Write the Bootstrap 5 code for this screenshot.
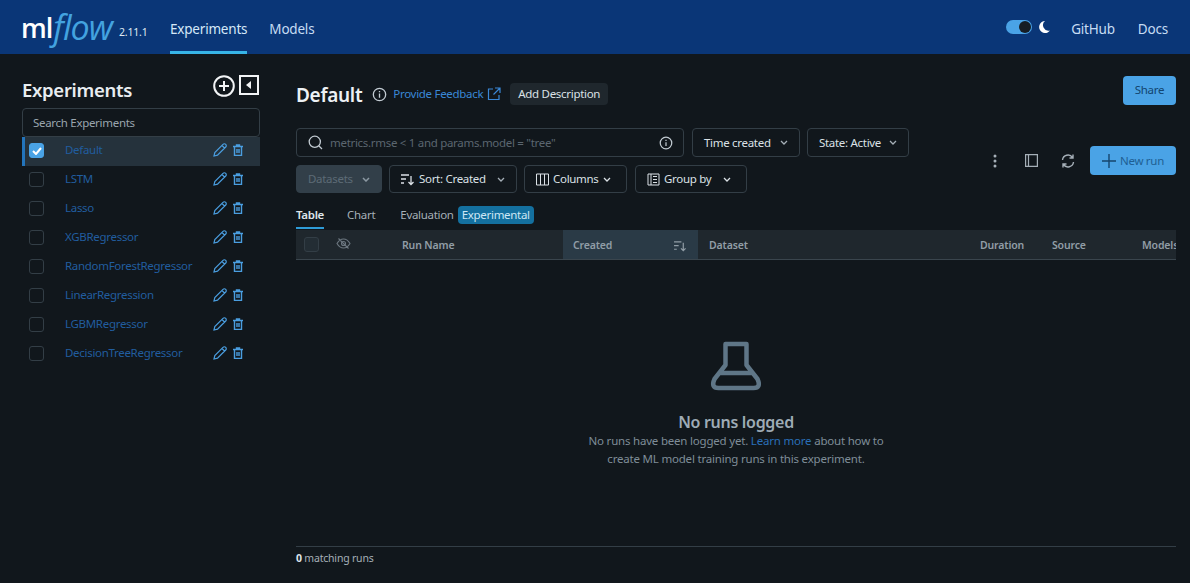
<!DOCTYPE html>
<html lang="en"><head><meta charset="utf-8"><title>MLflow</title>
<link href="https://cdn.jsdelivr.net/npm/bootstrap@5.3.0/dist/css/bootstrap.min.css" rel="stylesheet">
<style>
html,body{height:100%;}
body{background:#11171c;color:#e6ebef;font-family:"Noto Sans","Open Sans",sans-serif;font-size:11.5px;letter-spacing:-.3px;overflow:hidden;}
svg{display:block;flex:none;}
.top-bar{height:54px;background:#0a3677;padding:0 22px 0 21px;}
.logo-wrap{width:98px;height:54px;line-height:1;}
.logo-ml{font:600 27px/1 "Open Sans",sans-serif;color:#fff;letter-spacing:-1px;}
.logo-flow{font:italic 400 34px/1 "Open Sans",sans-serif;color:#43a3e0;margin-left:1px;letter-spacing:-1px;}
.logo-ver{font-size:10.5px;color:#dfe8f2;margin:11px 0 0 0;letter-spacing:-.2px;width:28px;white-space:nowrap;}
.top-nav{margin-left:23px;gap:22px;}
.top-link{height:54px;display:flex;align-items:center;font-size:13.5px;letter-spacing:-.2px;color:#c6dcf3;text-decoration:none;border-bottom:3px solid transparent;padding-top:7px;}
.top-link.on{color:#d5e8f8;border-bottom-color:#37b4e6;}
.main-area{height:529px;}
.side-pane{width:238px;margin-left:22px;flex:none;}
.side-head{height:54px;padding-top:21px;}
.side-title{font-size:18.5px;font-weight:600;color:#e8edf1;line-height:30px;}
.side-search{height:29px;border:1px solid #333e46;border-radius:4px;padding:0 10px;color:#9aa5ae;line-height:27px;}
.exp-row{height:29px;padding:0 0 2px 4px;color:#215d9f;border-left:3px solid transparent;}
.exp-row.sel{background:#25323c;border-left-color:#2374bb;}
.fake-check{width:15px;height:15px;border:1px solid #333e46;border-radius:3px;margin-right:21px;flex:none;}
.fake-check.on{background:#4aa3e6;border-color:#4aa3e6;}
.exp-name{flex:1;min-width:0;white-space:nowrap;margin-bottom:2px;}
.exp-tools{width:47px;gap:6px;padding-bottom:2px;}
.content-pane{margin-left:36px;margin-right:14px;min-width:0;}
.title-row{height:74px;padding-top:20px;}
.page-title{font-size:19px;font-weight:600;color:#edf1f4;line-height:42px;}
.title-meta{height:40px;}
.fb-link{color:#3a87d6;text-decoration:none;margin-left:6px;white-space:nowrap;}
.desc-chip{background:#1f272d;color:#dbe1e6;border-radius:4px;height:22px;padding:0 8px;line-height:21px;margin-left:9px;}
.share-btn{background:#4aa3e6;color:#12456f;border-radius:4px;width:53px;height:29px;line-height:28px;text-align:center;margin-top:2px;}
.tool-box{height:29px;border:1px solid #333e46;border-radius:4px;padding:0 11px;color:#dbe1e6;white-space:nowrap;}
.tool-row2 .tool-box{height:28px;}
.filter-box{width:388px;color:#5b6670;padding:0 10px 0 11px;}
.filter-icon{margin-right:7px;}
.w-time{width:108px;margin-left:1px;}.w-state{width:102px;}.w-data{width:86px;}.w-sort{width:128px;}
.w-cols{width:103px;padding-right:15px;}.w-group{width:112px;padding-right:15px;margin-left:1px;}
.tool-muted{background:#323f49;border-color:#323f49;color:#5d6b76;}
.tool-gap{gap:7px;}
.new-run{background:#4aa3e6;color:#1f5f93;border-radius:4px;height:29px;width:86px;}
.tab-row{height:25px;margin-top:12px;}
.tab-item{color:#a5afb7;height:24px;line-height:20px;}
.tab-item.on{color:#dfe5ea;font-weight:600;border-bottom:2px solid #2e9bd6;}
.exp-chip{background:#14709f;color:#cde7f5;border-radius:4px;height:18px;line-height:17px;padding:0 4px;margin:1px 0 0 4px;}
.run-head{height:30px;background:#1f272d;border-bottom:1px solid #3a454d;color:#919da6;font-weight:600;font-size:10.5px;letter-spacing:-.15px;overflow:hidden;white-space:nowrap;}
.col-box{flex:none;height:29px;display:flex;align-items:center;padding-top:2px;}
.col-created{background:#2a3a46;}
.empty-zone{height:286px;padding-top:81px;}
.empty-head{font-size:16px;font-weight:600;color:#9eabb5;line-height:22px;margin-top:18px;}
.empty-text{color:#7f8d98;line-height:18px;font-size:11.5px;letter-spacing:-.2px;margin-top:-1px;}
.empty-text a{color:#2a6fb8;text-decoration:none;}
.foot-row{border-top:1px solid #333e46;height:30px;line-height:23px;font-size:10.5px;letter-spacing:-.2px;color:#a5afb7;}
.foot-row b{color:#dfe5ea;}
.toggle-track{width:26px;height:14px;border-radius:7px;background:#4aa3e6;position:relative;}
.toggle-knob{position:absolute;right:1px;top:1px;width:12px;height:12px;border-radius:50%;background:#161d24;}
.moon{margin-left:6px;}
.gh-link{margin-left:20px;}
.docs-link{margin-left:23px;}
.tab-gap{margin-left:23px;}
.tab-gap-wide{margin-left:25px;}
.chk-head{margin:0 0 2px 8px;background:#232d34;}
.eye-icon{margin:0 0 5px 17px;}
.act-a{margin-left:28px;}.act-b{margin-left:23px;}.act-c{margin-left:15px;}
.c-icons{width:105px;}.c-name{width:162px;padding-left:1px;}.c-created{width:135px;padding:2px 11px 0 10px;}
.c-data{width:271px;padding-left:11px;}.c-dur{width:83px;padding-left:11px;}.c-src{width:90px;}
.info-icon{margin-left:10px;}
.side-icons{margin-right:1px;}
</style></head>
<body>
<header class="top-bar d-flex align-items-center">
  <div class="logo-wrap d-flex align-items-center"><span class="logo-ml">ml</span><span class="logo-flow">flow</span></div>
  <span class="logo-ver">2.11.1</span>
  <nav class="d-flex me-auto top-nav">
    <a class="top-link on" href="#">Experiments</a>
    <a class="top-link" href="#">Models</a>
  </nav>
  <div class="toggle-track"><div class="toggle-knob"></div></div>
  <svg class="moon" width="13" height="14" viewBox="0 0 13 14"><path d="M7 1a6 6 0 1 0 5 9.500A5.500 5.500 0 0 1 7 1z" fill="#fff"/></svg>
  <a class="top-link gh-link" href="#">GitHub</a>
  <a class="top-link docs-link" href="#">Docs</a>
</header>
<div class="main-area d-flex">
  <aside class="side-pane">
    <div class="side-head d-flex justify-content-between">
      <span class="side-title">Experiments</span>
      <div class="d-flex gap-1 align-items-start side-icons">
        <svg width="22" height="22" viewBox="0 0 22 22" fill="none" stroke="#f2f4f6" stroke-width="2"><circle cx="11" cy="11" r="9.800"/><path d="M11 6v10M6 11h10"/></svg>
        <svg width="20" height="20" viewBox="0 0 20 20"><rect x="1" y="1" width="18" height="18" fill="none" stroke="#f2f4f6" stroke-width="2"/><path d="M12 6v8l-5-4z" fill="#f2f4f6"/></svg>
      </div>
    </div>
    <div class="side-search">Search Experiments</div>
    <div id="exps"></div>
  </aside>
  <section class="content-pane flex-grow-1 d-flex flex-column">
    <div class="title-row d-flex align-items-start">
      <span class="page-title">Default</span>
      <div class="d-flex align-items-center title-meta">
        <svg class="info-icon" width="15" height="15" viewBox="0 0 16 16" fill="none" stroke="#c3ccd3" stroke-width="1.400"><circle cx="8" cy="8" r="6.600"/><path d="M8 7v4.500M8 4.200v1.400"/></svg>
        <a class="fb-link" href="#">Provide Feedback</a>
        <svg class="ms-1" width="14" height="14" viewBox="0 0 14 14" fill="none" stroke="#3a87d6" stroke-width="1.200"><path d="M6 2H1.500v10.500H12V8M8 1h5v5M13 1L6.500 7.500"/></svg>
        <span class="desc-chip">Add Description</span>
      </div>
      <span class="share-btn ms-auto">Share</span>
    </div>
    <div class="d-flex align-items-center justify-content-between">
      <div class="d-flex flex-column gap-2">
        <div class="d-flex tool-gap">
          <div class="tool-box filter-box d-flex align-items-center">
            <svg class="filter-icon" width="15" height="15" viewBox="0 0 15 15" fill="none" stroke="#c3ccd3" stroke-width="1.300"><circle cx="6.800" cy="6.800" r="5.600"/><path d="M11 11l3 3"/></svg>
            <span class="flex-grow-1">metrics.rmse &lt; 1 and params.model = "tree"</span>
            <svg width="14" height="14" viewBox="0 0 16 16" fill="none" stroke="#c3ccd3" stroke-width="1.400"><circle cx="8" cy="8" r="6.600"/><path d="M8 7v4.500M8 4.200v1.400"/></svg>
          </div>
          <div class="tool-box w-time d-flex align-items-center justify-content-between">Time created<svg width="8" height="5" viewBox="0 0 8 5" fill="none" stroke="#a5afb7" stroke-width="1.300"><path d="M1 1l3 3 3-3"/></svg></div>
          <div class="tool-box w-state d-flex align-items-center justify-content-between">State: Active<svg width="8" height="5" viewBox="0 0 8 5" fill="none" stroke="#a5afb7" stroke-width="1.300"><path d="M1 1l3 3 3-3"/></svg></div>
        </div>
        <div class="d-flex tool-gap tool-row2">
          <div class="tool-box w-data tool-muted d-flex align-items-center justify-content-between">Datasets<svg width="8" height="5" viewBox="0 0 8 5" fill="none" stroke="#8b98a2" stroke-width="1.500"><path d="M1 1l3 3 3-3"/></svg></div>
          <div class="tool-box w-sort d-flex align-items-center"><svg class="me-1" width="14" height="13" viewBox="0 0 14 13" fill="none" stroke="#dbe1e6" stroke-width="1.300"><path d="M0 2h8M0 6h5M0 10h3M10 3v8.500M7.500 9l2.500 2.500L12.500 9"/></svg>Sort: Created<svg class="ms-auto" width="8" height="5" viewBox="0 0 8 5" fill="none" stroke="#a5afb7" stroke-width="1.300"><path d="M1 1l3 3 3-3"/></svg></div>
          <div class="tool-box w-cols d-flex align-items-center"><svg class="me-1" width="13" height="13" viewBox="0 0 13 13" fill="none" stroke="#dbe1e6"><path d="M.5 1h12v11H.5zM4.500 1v11M8.500 1v11"/></svg>Columns<svg class="ms-auto" width="8" height="5" viewBox="0 0 8 5" fill="none" stroke="#dbe1e6" stroke-width="1.300"><path d="M1 1l3 3 3-3"/></svg></div>
          <div class="tool-box w-group d-flex align-items-center"><svg class="me-1" width="13" height="13" viewBox="0 0 13 13" fill="none" stroke="#dbe1e6"><path d="M1 1h11v11H1zM4 1v11M6 3.500h4M6 6.500h4M6 9.500h4"/></svg>Group by<svg class="ms-auto" width="8" height="5" viewBox="0 0 8 5" fill="none" stroke="#dbe1e6" stroke-width="1.300"><path d="M1 1l3 3 3-3"/></svg></div>
        </div>
      </div>
      <div class="d-flex align-items-center">
        <svg width="4" height="14" viewBox="0 0 4 14" fill="#a5afb7"><circle cx="2" cy="2" r="1.500"/><circle cx="2" cy="7" r="1.500"/><circle cx="2" cy="12" r="1.500"/></svg>
        <svg class="act-a" width="13" height="13" viewBox="0 0 13 13" fill="none" stroke="#a5afb7" stroke-width="1.200"><path d="M.6.6h11.800v11.800H.6zM3.500.6v11.800"/></svg>
        <svg class="act-b" width="14" height="14" viewBox="0 0 14 14" fill="none" stroke="#a5afb7" stroke-width="1.400"><path d="M1.500 6A5.500 5.500 0 0 1 11.500 3.500M12.500 8A5.500 5.500 0 0 1 2.500 10.500M12 .5v3.500H8.500M2 13.500V10h3.500"/></svg>
        <div class="new-run act-c d-flex align-items-center justify-content-center"><svg class="me-1" width="14" height="14" viewBox="0 0 14 14" stroke="#16456e" stroke-width="1.400"><path d="M7 0v14M0 7h14"/></svg>New run</div>
      </div>
    </div>
    <div class="tab-row d-flex align-items-start">
      <span class="tab-item on">Table</span>
      <span class="tab-item tab-gap">Chart</span>
      <span class="tab-item tab-gap-wide">Evaluation</span>
      <span class="exp-chip">Experimental</span>
    </div>
    <div class="run-head d-flex">
      <div class="col-box c-icons"><span class="fake-check chk-head"></span><svg class="eye-icon" width="15" height="13" viewBox="0 0 15 13" fill="none" stroke="#6c7780" stroke-width="1.100"><path d="M1 6.500C3 3 5 2 7.500 2S12 3 14 6.500C12 10 10 11 7.500 11S3 10 1 6.500zM2.500 1.500l10 10"/><circle cx="7.500" cy="6.500" r="2"/></svg></div>
      <div class="col-box c-name">Run Name</div>
      <div class="col-box col-created c-created justify-content-between"><span>Created</span><svg width="13" height="12" viewBox="0 0 14 13" fill="none" stroke="#919da6" stroke-width="1.300"><path d="M0 2h8M0 6h5M0 10h3M10 3v8.500M7.500 9l2.500 2.500L12.500 9"/></svg></div>
      <div class="col-box c-data">Dataset</div>
      <div class="col-box c-dur">Duration</div>
      <div class="col-box c-src">Source</div>
      <div class="col-box">Models</div>
    </div>
    <div class="empty-zone text-center d-flex flex-column align-items-center">
      <svg width="52" height="52" viewBox="0 0 52 52" fill="none" stroke="#5f7687" stroke-width="4.500" stroke-linejoin="round"><path d="M15.500 3h21v21l11 14q4 9-4 9H8.500q-8 0-4-9l11-14zM9 32h34"/></svg>
      <div class="empty-head">No runs logged</div>
      <div class="empty-text">No runs have been logged yet. <a href="#">Learn more</a> about how to<br>create ML model training runs in this experiment.</div>
    </div>
    <div class="foot-row"><b>0</b> matching runs</div>
  </section>
</div>
<script>
const names=["Default","LSTM","Lasso","XGBRegressor","RandomForestRegressor","LinearRegression","LGBMRegressor","DecisionTreeRegressor"];
document.getElementById("exps").innerHTML=names.map((n,i)=>`<div class="exp-row d-flex align-items-center ${i==0?'sel':''}">
<span class="fake-check ${i==0?'on':''} d-flex align-items-center justify-content-center">${i==0?'<svg width="10" height="8" viewBox="0 0 10 8" fill="none" stroke="#fff" stroke-width="2"><path d="M1 4l3 3 5-6"/></svg>':''}</span>
<span class="exp-name">${n}</span>
<span class="exp-tools d-flex align-items-center"><svg width="14" height="14" viewBox="0 0 14 14" fill="none" stroke="#4a9ee0" stroke-width="1.200"><path d="M1 13l.8-3.500L10 1.300a1.500 1.500 0 0 1 2.700 2.700L4.500 12.200zM9 2.500l2.500 2.500"/></svg><svg width="10" height="12" viewBox="0 0 10 12" fill="none" stroke="#4a9ee0" stroke-width="1.400"><path d="M0 2.500h10M3.500 2.500V1h3v1.500M1.500 2.500v9h7v-9M4 5v4M6 5v4"/></svg></span>
</div>`).join("");
</script>
<script src="https://cdn.jsdelivr.net/npm/bootstrap@5.3.0/dist/js/bootstrap.bundle.min.js"></script>
</body></html>
